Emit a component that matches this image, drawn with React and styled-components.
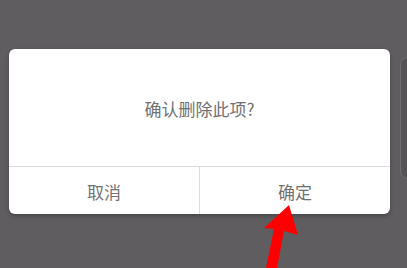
import React from "react";
import styled, { createGlobalStyle } from "styled-components";

const Global = createGlobalStyle`
  html, body { margin: 0; padding: 0; background: #5f5d5f; }
  body { font-family: "Noto Sans CJK SC", "Noto Sans", sans-serif; }
`;

const Stage = styled.div`
  position: relative;
  width: 407px;
  height: 268px;
  overflow: hidden;
  background: #5f5d5f;
  display: flex;
  align-items: flex-start;
  gap: 10px;
  padding: 49px 0 0 9px;
  box-sizing: border-box;
`;

const Dialog = styled.div`
  flex: none;
  width: 381px;
  height: 165px;
  background: #ffffff;
  border-radius: 6px;
  box-shadow: 0 2px 4px rgba(0, 0, 0, 0.25);
  display: flex;
  flex-direction: column;
  overflow: hidden;
`;

const Message = styled.div`
  height: 117px;
  display: flex;
  align-items: center;
  justify-content: center;
  font-size: 17px;
  color: #727073;
  padding-top: 2px;
  box-sizing: border-box;
`;

const Actions = styled.div`
  flex: 1;
  display: grid;
  grid-template-columns: 190px 1fr;
  border-top: 1.5px solid #dcdcdf;
`;

const Action = styled.div`
  display: flex;
  align-items: center;
  justify-content: center;
  font-size: 17px;
  color: #727073;
  padding-top: 1px;
  border-left: ${(p) => (p.$divider ? "1.5px solid #dcdcdf" : "none")};
`;

const SidePanel = styled.div`
  flex: none;
  margin-top: 8px;
  width: 40px;
  height: 120px;
  border-radius: 8px;
  border: 1.5px solid #6f6d6f;
  background: #555355;
`;

const Arrow = styled.svg`
  position: absolute;
  left: 0;
  top: 0;
  pointer-events: none;
`;

export default function App() {
  return (
    <>
      <Global />
      <Stage>
        <Dialog>
          <Message>确认删除此项?</Message>
          <Actions>
            <Action>取消</Action>
            <Action $divider>确定</Action>
          </Actions>
        </Dialog>
        <SidePanel />
        <Arrow width="407" height="268" viewBox="0 0 407 268">
          <polygon
            points="289,205 298,235 284,231 277,268 266,268 274,229 264,228"
            fill="#ff0000"
          />
        </Arrow>
      </Stage>
    </>
  );
}
